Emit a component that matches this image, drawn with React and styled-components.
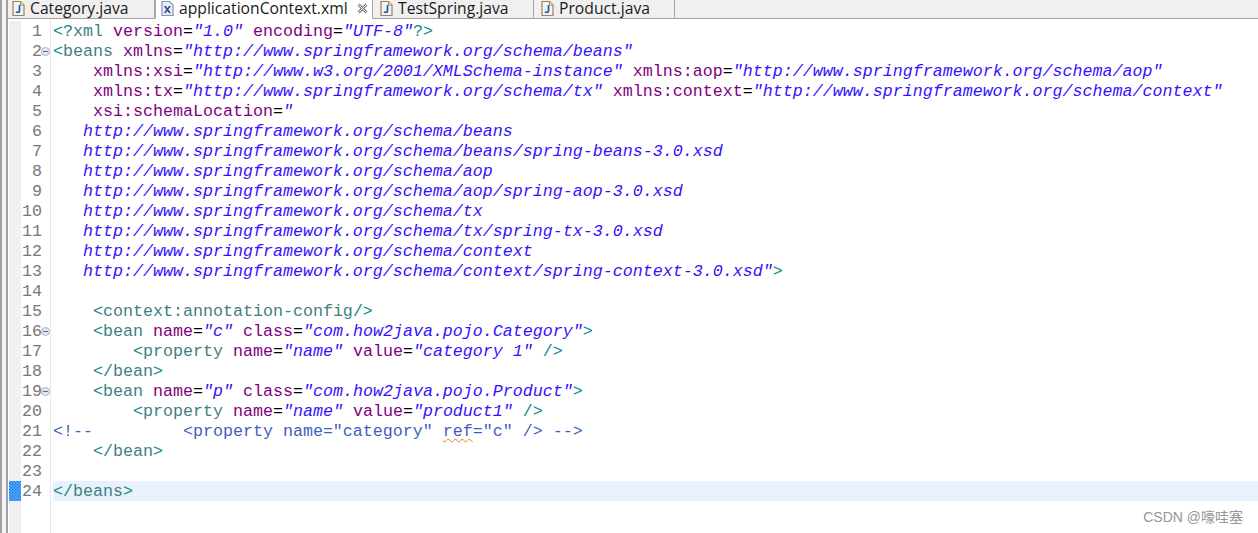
import React from "react";
import styled, { createGlobalStyle } from "styled-components";

const Global = createGlobalStyle`
  html, body { margin: 0; padding: 0; background: #fff; }
  #root { width: 1258px; height: 533px; overflow: hidden; }
`;

const Page = styled.div`
  position: relative;
  width: 1258px;
  height: 533px;
  display: flex;
  background: #fff;
  overflow: hidden;
`;

const Edge = styled.div`
  width: 8px;
  flex: none;
  box-sizing: border-box;
  background: #f4f4f4;
  border-left: 2px solid #a0a0a0;
  border-right: 2px solid #a0a0a0;
`;

const Main = styled.div`
  flex: 1;
  min-width: 0;
  display: flex;
  flex-direction: column;
`;

const TabBar = styled.div`
  height: 19px;
  flex: none;
  display: flex;
  background: #f0f0f0;
`;

const Tab = styled.div`
  width: ${(p) => p.$width}px;
  flex: none;
  box-sizing: border-box;
  display: flex;
  align-items: center;
  gap: 5px;
  padding: 0 0 2px ${(p) => p.$pad}px;
  border-right: 1px solid #a8a8a8;
  border-left: ${(p) => (p.$active ? "1px solid #a8a8a8" : "none")};
  border-bottom: 1px solid ${(p) => (p.$active ? "#fff" : "#a0a0a0")};
  background: ${(p) => (p.$active ? "#fff" : "#f0f0f0")};
  font: 15.7px/16px "Open Sans", "Noto Sans", sans-serif;
  color: #1a1a1a;
  white-space: nowrap;
`;

const TabFiller = styled.div`
  flex: 1;
  border-bottom: 1px solid #a0a0a0;
`;

const CloseIcon = styled.svg`
  margin-left: 4px;
  flex: none;
`;

const Editor = styled.div`
  flex: 1;
  display: flex;
  min-height: 0;
  padding-left: 1px;
`;

const Rail = styled.div`
  width: 12px;
  flex: none;
  margin-top: 2px;
  background: #f0f0f0;
`;

const Mark = styled.div`
  height: 20px;
  margin-top: 460px;
  background-color: #5aa8f6;
  background-image:
    linear-gradient(45deg, #1080f0 25%, transparent 25%, transparent 75%, #1080f0 75%),
    linear-gradient(45deg, #1080f0 25%, transparent 25%, transparent 75%, #1080f0 75%);
  background-size: 3px 3px;
  background-position: 0 0, 1.5px 1.5px;
`;

const Gutter = styled.div`
  width: 30px;
  flex: none;
  box-sizing: border-box;
  padding-top: 2px;
  border-right: 1px solid #e8e8e8;
`;

const LineNo = styled.div`
  position: relative;
  height: 20px;
  padding-left: ${(p) => (p.$n > 9 ? 1 : 11)}px;
  font: 16.67px/22px "Liberation Mono", monospace;
  color: #787878;
`;

const Fold = styled.svg`
  position: absolute;
  left: 20px;
  top: 6px;
`;

const Code = styled.div`
  flex: 1;
  min-width: 0;
  padding-top: 2px;
  margin-left: 2px;
`;

const Line = styled.div`
  height: 20px;
  font: 16.67px/22px "Liberation Mono", monospace;
  white-space: pre;
  background: ${(p) => (p.$current ? "#e8f2fe" : "transparent")};
`;

const Tag = styled.span`color: #3f7f7f;`;
const Punct = styled.span`color: #108888;`;
const Attr = styled.span`color: #7f007f;`;
const Eq = styled.span`color: #000;`;
const Val = styled.span`
  color: #3412ff;
  font-style: italic;
`;
const Comment = styled.span`color: #3f5fbf;`;
const Squiggle = styled.span`
  text-decoration: underline wavy #e08030 1px;
  text-underline-offset: 2px;
`;

const Watermark = styled.div`
  position: absolute;
  right: 15px;
  top: 509px;
  font: 14px/16px "Liberation Sans", "Noto Sans CJK SC", sans-serif;
  color: #969696;
`;

function JavaIcon() {
  return (
    <svg width="13" height="15" viewBox="0 0 13 15" style={{ flex: "none" }}>
      <path d="M1 .5H8.5L12 4V14.5H1Z" fill="#eef4fa" stroke="#a08448" strokeWidth="1.2" />
      <path d="M8.5 .5V4H12" fill="#f4ecd8" stroke="#a08448" />
      <path d="M7.5 4V10C7.5 11.6 5.4 11.9 4 10.6" fill="none" stroke="#2a62a8" strokeWidth="1.8" />
    </svg>
  );
}

function XmlIcon() {
  return (
    <svg width="13" height="15" viewBox="0 0 13 15" style={{ flex: "none" }}>
      <path d="M1 .5H8.5L12 4V14.5H1Z" fill="#e8eff8" stroke="#8494b0" strokeWidth="1.2" />
      <path d="M3.8 5L9 12M9 5L3.8 12" stroke="#2c4a86" strokeWidth="1.6" />
    </svg>
  );
}

const a = (name, value) => (
  <>
    {" "}
    <Attr>{name}</Attr>
    <Eq>=</Eq>
    <Val>{value}</Val>
  </>
);

const url = (text) => <Val>{text}</Val>;

const lines = [
  <><Punct>&lt;?</Punct><Tag>xml</Tag>{a("version", '"1.0"')}{a("encoding", '"UTF-8"')}<Punct>?&gt;</Punct></>,
  <><Punct>&lt;</Punct><Tag>beans</Tag>{a("xmlns", '"http://www.springframework.org/schema/beans"')}</>,
  <>{"   "}{a("xmlns:xsi", '"http://www.w3.org/2001/XMLSchema-instance"')}{a("xmlns:aop", '"http://www.springframework.org/schema/aop"')}</>,
  <>{"   "}{a("xmlns:tx", '"http://www.springframework.org/schema/tx"')}{a("xmlns:context", '"http://www.springframework.org/schema/context"')}</>,
  <>{"   "}{a("xsi:schemaLocation", '"')}</>,
  url("   http://www.springframework.org/schema/beans"),
  url("   http://www.springframework.org/schema/beans/spring-beans-3.0.xsd"),
  url("   http://www.springframework.org/schema/aop"),
  url("   http://www.springframework.org/schema/aop/spring-aop-3.0.xsd"),
  url("   http://www.springframework.org/schema/tx"),
  url("   http://www.springframework.org/schema/tx/spring-tx-3.0.xsd"),
  url("   http://www.springframework.org/schema/context"),
  <>{url('   http://www.springframework.org/schema/context/spring-context-3.0.xsd"')}<Punct>&gt;</Punct></>,
  <></>,
  <>{"    "}<Punct>&lt;</Punct><Tag>context:annotation-config</Tag><Punct>/&gt;</Punct></>,
  <>{"    "}<Punct>&lt;</Punct><Tag>bean</Tag>{a("name", '"c"')}{a("class", '"com.how2java.pojo.Category"')}<Punct>&gt;</Punct></>,
  <>{"        "}<Punct>&lt;</Punct><Tag>property</Tag>{a("name", '"name"')}{a("value", '"category 1"')} <Punct>/&gt;</Punct></>,
  <>{"    "}<Punct>&lt;/</Punct><Tag>bean</Tag><Punct>&gt;</Punct></>,
  <>{"    "}<Punct>&lt;</Punct><Tag>bean</Tag>{a("name", '"p"')}{a("class", '"com.how2java.pojo.Product"')}<Punct>&gt;</Punct></>,
  <>{"        "}<Punct>&lt;</Punct><Tag>property</Tag>{a("name", '"name"')}{a("value", '"product1"')} <Punct>/&gt;</Punct></>,
  <Comment>{'<!--         <property name="category" '}<Squiggle>ref</Squiggle>{'="c" /> -->'}</Comment>,
  <>{"    "}<Punct>&lt;/</Punct><Tag>bean</Tag><Punct>&gt;</Punct></>,
  <></>,
  <><Punct>&lt;/</Punct><Tag>beans</Tag><Punct>&gt;</Punct></>,
];

const folds = [2, 16, 19];

export default function App() {
  return (
    <Page>
      <Global />
      <Edge />
      <Main>
        <TabBar>
          <Tab $width={147} $pad={4}><JavaIcon />Category.java</Tab>
          <Tab $width={218} $pad={5} $active>
            <XmlIcon />applicationContext.xml
            <CloseIcon width="11" height="11" viewBox="0 0 11 11">
              <path d="M1.5 1.5L9.5 9.5M9.5 1.5L1.5 9.5" stroke="#777" strokeWidth="2.6" />
              <path d="M1.5 1.5L9.5 9.5M9.5 1.5L1.5 9.5" stroke="#fff" strokeWidth="1" />
            </CloseIcon>
          </Tab>
          <Tab $width={161} $pad={7}><JavaIcon />TestSpring.java</Tab>
          <Tab $width={141} $pad={7}><JavaIcon />Product.java</Tab>
          <TabFiller />
        </TabBar>
        <Editor>
          <Rail><Mark /></Rail>
          <Gutter>
            {lines.map((_, i) => (
              <LineNo key={i} $n={i + 1}>
                {i + 1}
                {folds.includes(i + 1) && (
                  <Fold width="9" height="9" viewBox="0 0 9 9">
                    <circle cx="4.5" cy="4.5" r="4" fill="#e4e8ee" stroke="#a8b4c4" />
                    <path d="M2 4.5H7" stroke="#5a6a80" />
                  </Fold>
                )}
              </LineNo>
            ))}
          </Gutter>
          <Code>
            {lines.map((l, i) => (
              <Line key={i} $current={i === 23}>{l}</Line>
            ))}
          </Code>
        </Editor>
      </Main>
      <Watermark>CSDN @嚎哇塞</Watermark>
    </Page>
  );
}
